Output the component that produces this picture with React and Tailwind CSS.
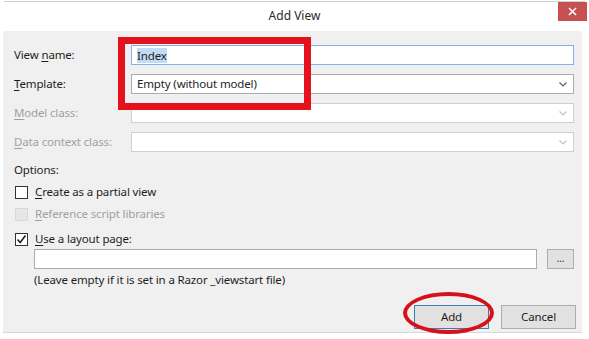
import React from 'react';

const font = { fontFamily: '"Noto Sans", "Open Sans", sans-serif' };

const Chevron = ({ color }) => (
  <svg width="8" height="5" viewBox="0 0 8 5" className="absolute right-[6px] top-[7px]">
    <path d="M0.5 0.5 L4 4 L7.5 0.5" fill="none" stroke={color} strokeWidth="1.2" />
  </svg>
);

const Label = ({ pre = '', u, rest, disabled }) => (
  <div className={`leading-[20px] ${disabled ? 'text-[#a0a0a0]' : 'text-[#1e1e1e]'}`}>
    {pre}
    <span className="underline underline-offset-2">{u}</span>
    {rest}
  </div>
);

const Checkbox = ({ checked, disabled }) => (
  <div
    className={`w-[13px] h-[13px] border flex items-center justify-center ${
      disabled ? 'border-[#d8d8d8] bg-[#e6e6e6]' : 'border-[#333] bg-white'
    }`}
  >
    {checked && (
      <svg width="11" height="11" viewBox="0 0 11 11">
        <path d="M1.5 5.5 L4.2 8.5 L9.5 1.5" fill="none" stroke="#222" strokeWidth="1.6" />
      </svg>
    )}
  </div>
);

export default function App() {
  return (
    <div className="w-[589px] h-[339px] bg-white relative overflow-hidden text-[11.5px] tracking-[-0.15px]" style={font}>
      {/* title bar */}
      <div className="h-[30px] mx-[4px] border-t border-[#cfcfcf] mt-[1px] relative flex items-center justify-center">
        <span className="text-[12px] tracking-normal text-[#2b2b2b] -mt-[1px]">Add View</span>
        <div className="absolute right-[-2px] top-0 w-[29px] h-[19px] bg-[#c75050] flex items-center justify-center">
          <svg width="9" height="9" viewBox="0 0 9 9">
            <path d="M1 1 L8 8 M8 1 L1 8" stroke="white" strokeWidth="1.6" />
          </svg>
        </div>
      </div>

      {/* body */}
      <div className="mx-[3px] w-[579px] h-[302px] bg-[#f0f0f0] border-b border-[#d9d9d9] pl-[11px] pr-[6px] pt-[14px]">
        <div className="grid grid-cols-[117px_443px] gap-y-[9px] items-center">
          <Label pre="View " u="n" rest="ame:" />
          <div className="h-[20px] bg-white border border-[#7eb4ea] flex items-center px-[5px]">
            <span className="bg-[#c1dcf5] leading-[15px] text-[#1e1e1e]">Index</span>
          </div>
          <Label u="T" rest="emplate:" />
          <div className="h-[20px] bg-white border border-[#acacac] relative flex items-center px-[5px]">
            <span className="text-[#1e1e1e]">Empty (without model)</span>
            <Chevron color="#606060" />
          </div>
          <Label u="M" rest="odel class:" disabled />
          <div className="h-[20px] bg-white border border-[#cfcfcf] relative">
            <Chevron color="#c2c2c2" />
          </div>
          <Label u="D" rest="ata context class:" disabled />
          <div className="h-[20px] bg-white border border-[#cfcfcf] relative">
            <Chevron color="#c2c2c2" />
          </div>
        </div>

        <div className="mt-[10px] leading-[16px] text-[#1e1e1e]">Options:</div>

        <div className="mt-[7px] flex items-center gap-[7px] pl-[1px] h-[14px]">
          <Checkbox />
          <Label u="C" rest="reate as a partial view" />
        </div>
        <div className="mt-[8px] flex items-center gap-[7px] pl-[1px] h-[14px]">
          <Checkbox disabled />
          <Label u="R" rest="eference script libraries" disabled />
        </div>
        <div className="mt-[11px] flex items-center gap-[7px] pl-[1px] h-[14px]">
          <Checkbox checked />
          <Label u="U" rest="se a layout page:" />
        </div>

        <div className="mt-[3px] ml-[20px] flex items-center gap-[10px]">
          <div className="w-[503px] h-[20px] bg-white border border-[#acacac]" />
          <div className="w-[27px] h-[20px] bg-[#e1e1e1] border border-[#adadad] flex items-center justify-center text-[10px] text-[#333] leading-none pb-[3px]">
            ...
          </div>
        </div>

        <div className="mt-[2px] ml-[20px] leading-[18px] text-[#1e1e1e]">
          (Leave empty if it is set in a Razor _viewstart file)
        </div>

        <div className="mt-[16px] flex justify-end gap-[12px]">
          <div className="w-[75px] h-[24px] bg-[#e1e1e1] border border-[#3c7fb1] flex items-center justify-center text-[#1e1e1e]">
            Add
          </div>
          <div className="w-[75px] h-[24px] bg-[#e1e1e1] border border-[#adadad] flex items-center justify-center text-[#1e1e1e]">
            Cancel
          </div>
        </div>
      </div>

      {/* annotations */}
      <div className="absolute left-[118px] top-[37px] w-[193px] h-[73px] border-[7px] border-[#e3121d]" />
      <div className="absolute left-[403px] top-[292px] w-[91px] h-[42px] rounded-[50%] border-[4px] border-[#d8101a]" />
    </div>
  );
}
